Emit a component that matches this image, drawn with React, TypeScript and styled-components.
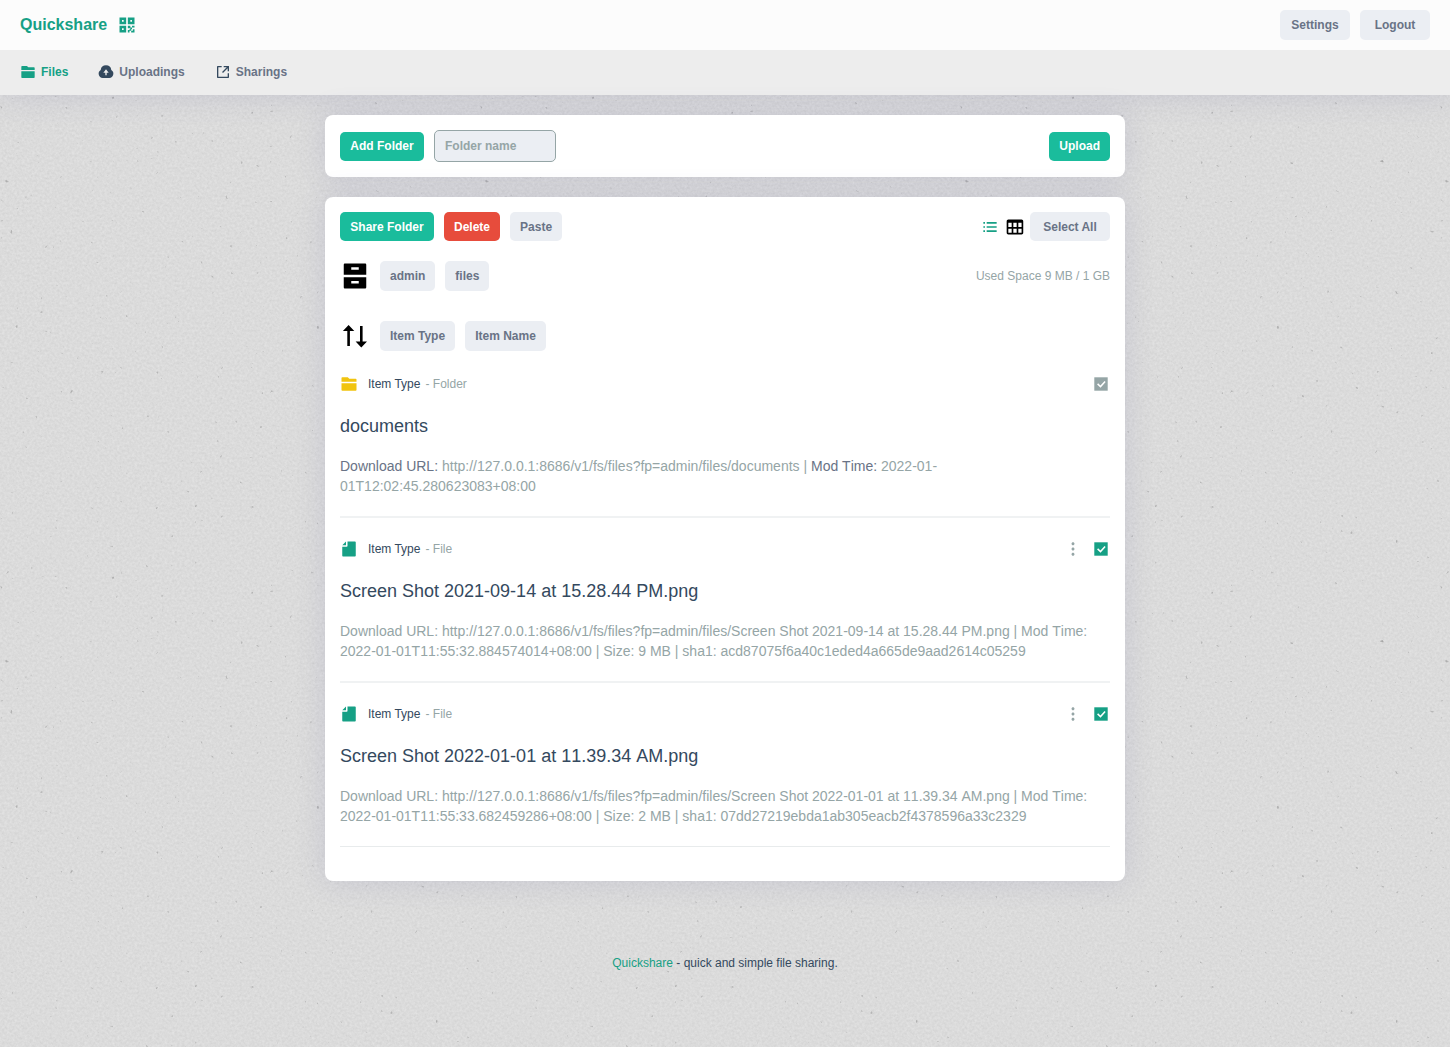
import React, { useState } from 'react';
import styled, { createGlobalStyle } from 'styled-components';
import {
  RiArchiveDrawerFill,
  RiFile2Fill,
  RiFolder2Fill,
  RiMore2Fill,
  RiQrCodeFill,
  RiShareBoxLine,
} from 'react-icons/ri';
import { BiListUl, BiTable } from 'react-icons/bi';

const color = {
  green: '#16a085',
  greenButton: '#1abc9c',
  red: '#e74c3c',
  yellow: '#f1c40f',
  navy: '#34495e',
  slate: '#697386',
  grey: '#95a5a6',
  chip: '#ebeef3',
};

const shadow = '0 0 30px rgba(90, 90, 150, 0.16)';

const paper = encodeURIComponent(
  `<svg xmlns="http://www.w3.org/2000/svg" width="480" height="480">
    <filter id="grain" x="0" y="0" width="100%" height="100%" color-interpolation-filters="sRGB">
      <feTurbulence type="fractalNoise" baseFrequency="0.4" numOctaves="3" seed="7" stitchTiles="stitch"/>
      <feColorMatrix values="0.08 0 0 0 0.819  0.08 0 0 0 0.819  0.08 0 0 0 0.819  0 0 0 0 1"/>
    </filter>
    <filter id="specks" x="0" y="0" width="100%" height="100%" color-interpolation-filters="sRGB">
      <feTurbulence type="fractalNoise" baseFrequency="0.2" numOctaves="2" seed="21" stitchTiles="stitch"/>
      <feColorMatrix values="0 0 0 0 0.5  0 0 0 0 0.5  0 0 0 0 0.5  7 0 0 0 -5.4"/>
    </filter>
    <rect width="480" height="480" filter="url(#grain)"/>
    <rect width="480" height="480" filter="url(#specks)" opacity="0.6"/>
  </svg>`,
);

const GlobalStyle = createGlobalStyle`
  *, *::before, *::after { box-sizing: border-box; }
  body {
    margin: 0;
    min-height: 100vh;
    background: #dbdbdb url("data:image/svg+xml,${paper}");
    color: ${color.navy};
    font: 12px/20px "Liberation Sans", Arial, sans-serif;
  }
  button, input { font: inherit; }
  svg { display: block; flex: none; }
`;

const Head = styled.div`
  box-shadow: ${shadow};
`;

const TopBar = styled.header`
  display: flex;
  align-items: center;
  justify-content: space-between;
  height: 50px;
  padding: 0 20px;
  background: #fcfcfc;
`;

const Brand = styled.a`
  display: flex;
  align-items: center;
  gap: 10px;
  color: ${color.green};
  font-size: 16px;
  font-weight: bold;
  text-decoration: none;
`;

const Tabs = styled.nav`
  display: flex;
  align-items: center;
  gap: 30px;
  height: 45px;
  padding: 0 20px 2px;
  background: #ededed;
`;

const Tab = styled.button<{ $active?: boolean }>`
  display: flex;
  align-items: center;
  gap: 5px;
  padding: 0;
  border: 0;
  background: none;
  color: ${(p) => (p.$active ? color.green : color.slate)};
  font-weight: bold;
  cursor: pointer;

  svg { color: ${(p) => (p.$active ? color.green : color.navy)}; }
`;

const Page = styled.main`
  display: flex;
  flex-direction: column;
  gap: 20px;
  max-width: 800px;
  margin: 20px auto 0;
`;

const Card = styled.section`
  padding: 15px;
  border-radius: 8px;
  background: #fff;
  box-shadow: ${shadow};
`;

const FilesCard = styled(Card)`
  padding-bottom: 34px;
`;

const Bar = styled.div`
  display: flex;
  align-items: center;
  justify-content: space-between;
`;

const Group = styled.div<{ $gap?: number }>`
  display: flex;
  align-items: center;
  gap: ${(p) => p.$gap ?? 10}px;
`;

const PathBar = styled(Bar)`
  margin-top: 20px;
`;

const SortBar = styled(Bar)`
  margin-top: 30px;
`;

const tones = {
  plain: [color.chip, color.slate],
  primary: [color.greenButton, '#fff'],
  danger: [color.red, '#fff'],
};

const Button = styled.button<{ $tone?: keyof typeof tones; $width?: number; $tall?: boolean }>`
  height: ${(p) => (p.$tall ? 30 : 29)}px;
  min-width: ${(p) => p.$width ?? 0}px;
  padding: 0 10px;
  border: 0;
  border-radius: 5px;
  background: ${(p) => tones[p.$tone ?? 'plain'][0]};
  color: ${(p) => tones[p.$tone ?? 'plain'][1]};
  font-weight: bold;
  cursor: pointer;
`;

const FolderInput = styled.input`
  width: 122px;
  height: 32px;
  padding: 0 10px;
  border: 1px solid ${color.grey};
  border-radius: 5px;
  background: ${color.chip};
  color: ${color.slate};
  font-weight: bold;

  &::placeholder { color: ${color.grey}; opacity: 1; }
`;

const IconButton = styled.button<{ $color: string }>`
  display: flex;
  padding: 0;
  border: 0;
  background: none;
  color: ${(p) => p.$color};
  cursor: pointer;
`;

const LeadIcon = styled.span`
  display: flex;
  color: #000;
`;

const Quota = styled.span`
  color: ${color.grey};
`;

const List = styled.ul`
  margin: 23px 0 0;
  padding: 0;
  list-style: none;
`;

const Item = styled.li`
  padding-bottom: 20px;
  margin-bottom: 21px;
  border-bottom: 2px solid #f0f2f3;

  &:last-child {
    margin-bottom: 0;
    border-bottom: 1px solid #e8ebec;
  }
`;

const Kind = styled.div`
  display: flex;
  align-items: center;
  gap: 5px;
  color: ${color.navy};

  svg { margin-right: 5px; }
`;

const Muted = styled.span`
  color: ${color.grey};
`;

const Name = styled.h2`
  margin: 20px 0 18px;
  color: ${color.navy};
  font-size: 18px;
  font-weight: normal;
  font-kerning: none;
  line-height: 24px;
`;

const Details = styled.p`
  margin: 0;
  color: ${color.grey};
  font-size: 14px;
  font-kerning: none;
  line-height: 20px;
`;

const FolderDetails = styled(Details)`
  max-width: 640px;
`;

const Strong = styled.span`
  color: ${color.slate};
`;

const CheckLabel = styled.label<{ $on: boolean }>`
  position: relative;
  display: flex;
  color: ${(p) => (p.$on ? color.green : color.grey)};
  cursor: pointer;

  input {
    position: absolute;
    inset: 0;
    margin: 0;
    opacity: 0;
  }
`;

const Footer = styled.footer`
  padding: 72px 20px 73px;
  text-align: center;

  a { color: ${color.green}; text-decoration: none; }
`;

const CloudIcon = () => (
  <svg width="16" height="16" viewBox="0 0 24 24" fill="currentColor" aria-hidden="true">
    <path d="M7 20.981a6.5 6.5 0 0 1-2.936-12 8.001 8.001 0 0 1 15.872 0 6.5 6.5 0 0 1-2.936 12V21H7v-.019zM13 13h3l-4-5-4 5h3v4h2v-4z" />
  </svg>
);

const SortIcon = () => (
  <svg width="30" height="30" viewBox="0 0 30 30" aria-hidden="true">
    <path d="M8.600 4l5.700 6H9.900v15H7.300V10H2.900zM20 5h2.600v15.500H27l-5.700 6-5.700-6H20z" />
  </svg>
);

const CheckIcon = () => (
  <svg width="18" height="18" viewBox="0 0 18 18" aria-hidden="true">
    <rect x="2.300" y="2.300" width="13.400" height="13.400" fill="currentColor" />
    <path d="M5.600 8.900l2.900 2.700 4.600-5" fill="none" stroke="#fff" strokeWidth="1.500" />
  </svg>
);

type Entry = { name: string; folder?: boolean; time: string; size?: string; sha1?: string };

const entries: Entry[] = [
  { name: 'documents', folder: true, time: '2022-01-01T12:02:45.280623083+08:00' },
  {
    name: 'Screen Shot 2021-09-14 at 15.28.44 PM.png',
    time: '2022-01-01T11:55:32.884574014+08:00',
    size: '9 MB',
    sha1: 'acd87075f6a40c1eded4a665de9aad2614c05259',
  },
  {
    name: 'Screen Shot 2022-01-01 at 11.39.34 AM.png',
    time: '2022-01-01T11:55:33.682459286+08:00',
    size: '2 MB',
    sha1: '07dd27219ebda1ab305eacb2f4378596a33c2329',
  },
];

const EntryRow = ({ entry }: { entry: Entry }) => {
  const [on, setOn] = useState(!entry.folder);
  const url = `http://127.0.0.1:8686/v1/fs/files?fp=admin/files/${entry.name}`;
  return (
    <Item>
      <Bar>
        <Kind>
          {entry.folder ? <RiFolder2Fill size={18} color={color.yellow} /> : <RiFile2Fill size={18} color={color.green} />}
          <span>Item Type</span>
          <Muted>- {entry.folder ? 'Folder' : 'File'}</Muted>
        </Kind>
        <Group>
          {!entry.folder && (
            <IconButton $color={color.grey} aria-label="More">
              <RiMore2Fill size={18} />
            </IconButton>
          )}
          <CheckLabel $on={on}>
            <input type="checkbox" aria-label={`Select ${entry.name}`} checked={on} onChange={() => setOn(!on)} />
            <CheckIcon />
          </CheckLabel>
        </Group>
      </Bar>
      <Name>{entry.name}</Name>
      {entry.folder ? (
        <FolderDetails>
          <Strong>Download URL:</Strong> {url} | <Strong>Mod Time:</Strong> {entry.time}
        </FolderDetails>
      ) : (
        <Details>
          {`Download URL: ${url} | Mod Time: ${entry.time} | Size: ${entry.size} | sha1: ${entry.sha1}`}
        </Details>
      )}
    </Item>
  );
};

export default function App() {
  return (
    <>
      <GlobalStyle />
      <Head>
        <TopBar>
          <Brand href="#">
            Quickshare
            <RiQrCodeFill size={20} />
          </Brand>
          <Group>
            <Button $width={70} $tall>Settings</Button>
            <Button $width={70} $tall>Logout</Button>
          </Group>
        </TopBar>
        <Tabs>
          <Tab $active><RiFolder2Fill size={16} />Files</Tab>
          <Tab><CloudIcon />Uploadings</Tab>
          <Tab><RiShareBoxLine size={16} />Sharings</Tab>
        </Tabs>
      </Head>
      <Page>
        <Card>
          <Bar>
            <Group>
              <Button $tone="primary" $width={84}>Add Folder</Button>
              <FolderInput aria-label="Folder name" placeholder="Folder name" />
            </Group>
            <Button $tone="primary">Upload</Button>
          </Bar>
        </Card>
        <FilesCard>
          <Bar>
            <Group>
              <Button $tone="primary" $width={94}>Share Folder</Button>
              <Button $tone="danger">Delete</Button>
              <Button>Paste</Button>
            </Group>
            <Group $gap={5}>
              <IconButton $color={color.green} aria-label="List view"><BiListUl size={20} /></IconButton>
              <IconButton $color="#000" aria-label="Table view"><BiTable size={20} /></IconButton>
              <Button $width={80}>Select All</Button>
            </Group>
          </Bar>
          <PathBar>
            <Group>
              <LeadIcon><RiArchiveDrawerFill size={30} /></LeadIcon>
              <Button $tall>admin</Button>
              <Button $tall>files</Button>
            </Group>
            <Quota>Used Space 9 MB / 1 GB</Quota>
          </PathBar>
          <SortBar>
            <Group>
              <LeadIcon><SortIcon /></LeadIcon>
              <Button $tall>Item Type</Button>
              <Button $tall>Item Name</Button>
            </Group>
          </SortBar>
          <List>
            {entries.map((entry) => <EntryRow key={entry.name} entry={entry} />)}
          </List>
        </FilesCard>
      </Page>
      <Footer>
        <a href="#">Quickshare</a> - quick and simple file sharing.
      </Footer>
    </>
  );
}
